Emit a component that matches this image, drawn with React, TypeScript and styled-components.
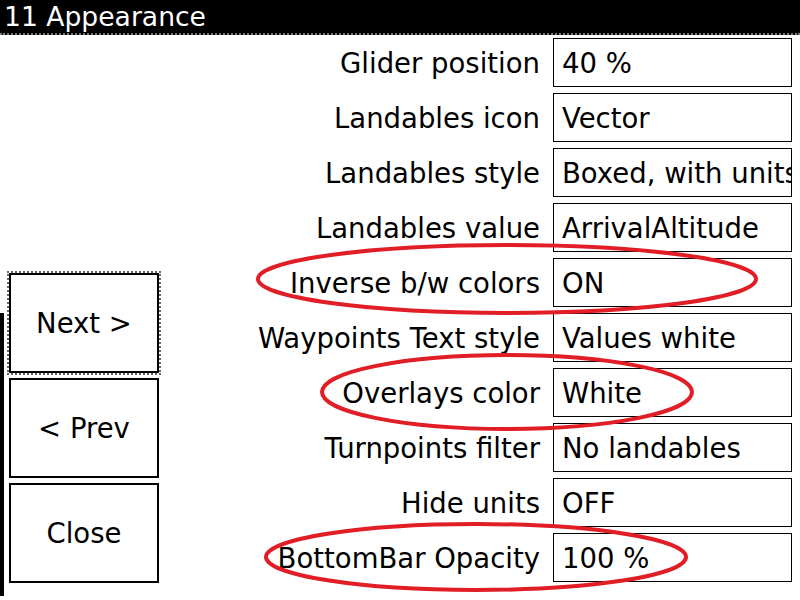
import styled, { createGlobalStyle } from "styled-components";

const GlobalStyle = createGlobalStyle`
  html, body {
    margin: 0;
    padding: 0;
    background: #fff;
  }
  body {
    font-family: "DejaVu Sans", "Liberation Sans", sans-serif;
    color: #000;
  }
`;

const Page = styled.div`
  position: relative;
  width: 800px;
  height: 600px;
  overflow: hidden;
  display: flex;
  flex-direction: column;
  background: #fff;
`;

const TitleBar = styled.div`
  height: 33px;
  background: #000;
  color: #fff;
  font-size: 26.6px;
  line-height: 33px;
  padding-left: 4px;
  border-bottom: 2px dotted #777;
  white-space: nowrap;
`;

const Body = styled.div`
  flex: 1;
  display: flex;
`;

const Side = styled.div`
  width: 170px;
  display: flex;
  flex-direction: column;
  justify-content: flex-end;
  gap: 5px;
  padding: 0 0 17px 9px;
  box-sizing: border-box;
`;

const Button = styled.div<{ $focused?: boolean }>`
  width: 150px;
  height: 100px;
  box-sizing: border-box;
  border: 2px solid #000;
  display: flex;
  align-items: center;
  justify-content: center;
  font-size: 27.5px;
  outline: ${(p) => (p.$focused ? "2px dotted #666" : "none")};
`;

const Rows = styled.div`
  flex: 1;
  display: flex;
  flex-direction: column;
  gap: 6px;
  padding: 3px 8px 0 0;
`;

const Row = styled.div`
  display: flex;
  align-items: center;
  height: 49px;
  gap: 13px;
`;

const Label = styled.div`
  flex: 1;
  text-align: right;
  font-size: 27.5px;
  white-space: nowrap;
`;

const Value = styled.div`
  width: 239px;
  height: 49px;
  box-sizing: border-box;
  border: 1.5px solid #000;
  font-size: 27.5px;
  line-height: 48px;
  padding-left: 8px;
  white-space: nowrap;
  overflow: hidden;
`;

const EdgeBar = styled.div`
  position: absolute;
  left: 0;
  top: 313px;
  width: 4px;
  height: 283px;
  background: #000;
`;

const Marks = styled.svg`
  position: absolute;
  left: 0;
  top: 0;
  pointer-events: none;
`;

const rows: [string, string][] = [
  ["Glider position", "40 %"],
  ["Landables icon", "Vector"],
  ["Landables style", "Boxed, with units"],
  ["Landables value", "ArrivalAltitude"],
  ["Inverse b/w colors", "ON"],
  ["Waypoints Text style", "Values white"],
  ["Overlays color", "White"],
  ["Turnpoints filter", "No landables"],
  ["Hide units", "OFF"],
  ["BottomBar Opacity", "100 %"],
];

export default function App() {
  return (
    <Page>
      <GlobalStyle />
      <TitleBar>11 Appearance</TitleBar>
      <Body>
        <Side>
          <Button $focused>Next &gt;</Button>
          <Button>&lt; Prev</Button>
          <Button>Close</Button>
        </Side>
        <Rows>
          {rows.map(([label, value]) => (
            <Row key={label}>
              <Label>{label}</Label>
              <Value>{value}</Value>
            </Row>
          ))}
        </Rows>
      </Body>
      <EdgeBar />
      <Marks width="800" height="600" viewBox="0 0 800 600">
        <g fill="none" stroke="#e11d26" strokeWidth="4">
          <ellipse cx="507" cy="279" rx="249" ry="34" />
          <ellipse cx="507" cy="392" rx="185" ry="37" />
          <ellipse cx="476" cy="557" rx="210" ry="33" />
        </g>
      </Marks>
    </Page>
  );
}
